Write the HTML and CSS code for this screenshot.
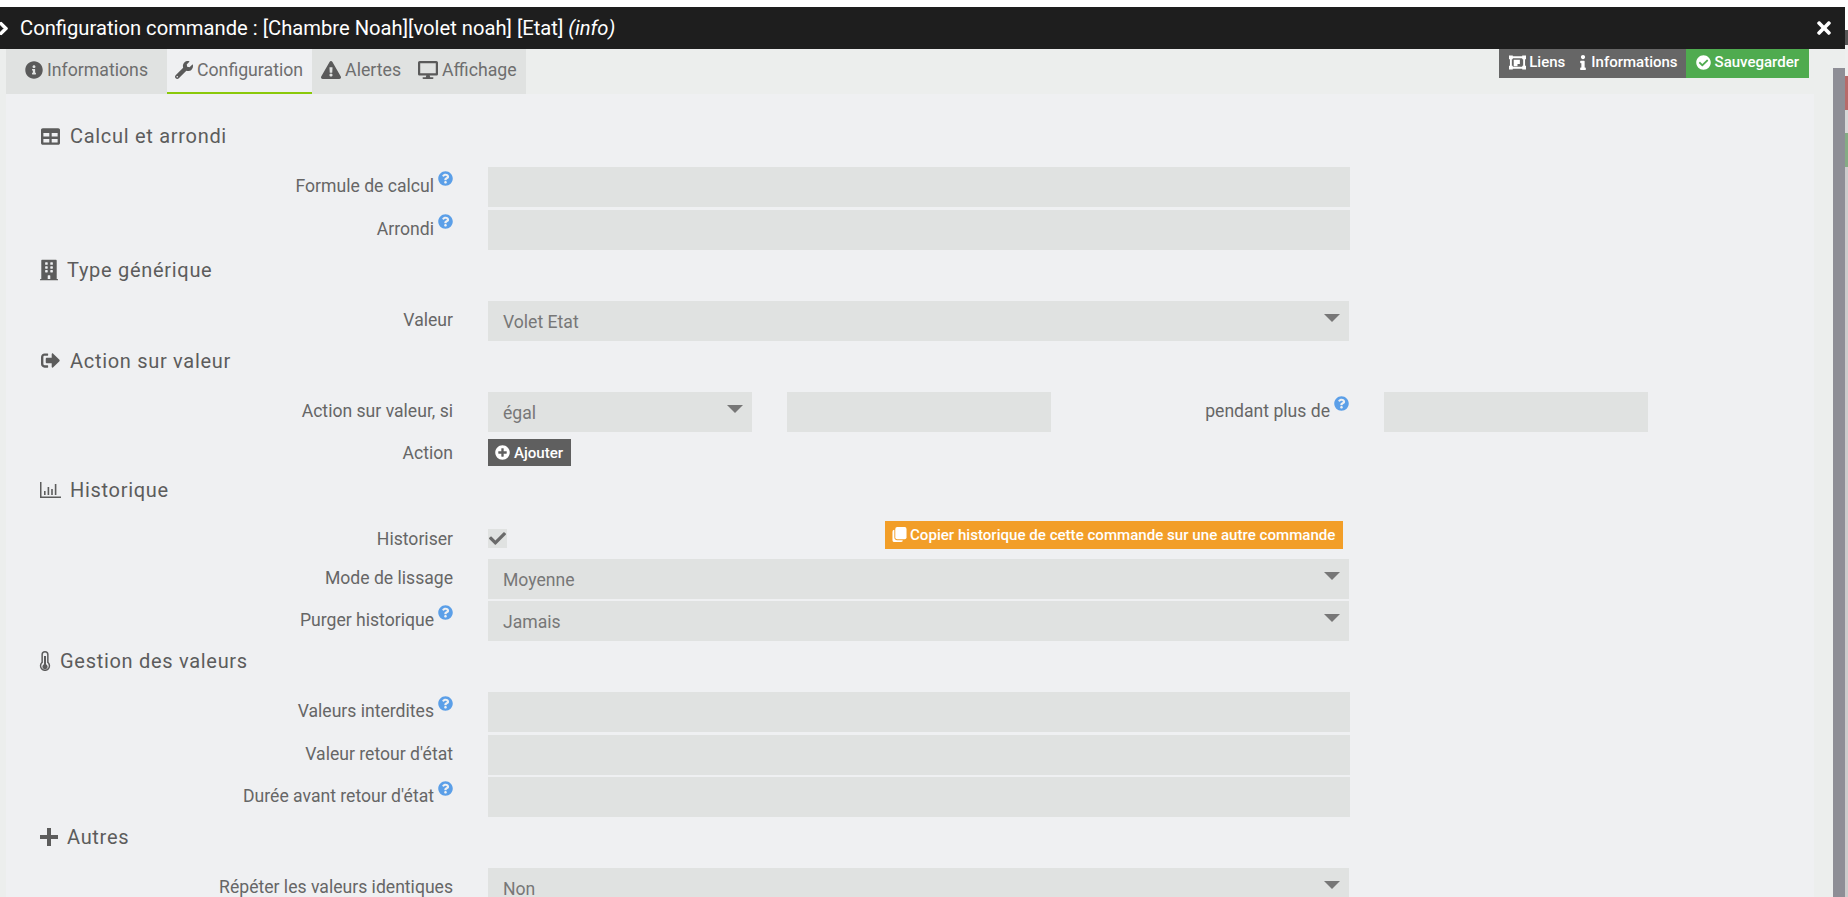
FILE: index.html
```html
<!DOCTYPE html>
<html lang="fr">
<head>
<meta charset="utf-8">
<title>Configuration commande</title>
<link rel="stylesheet" href="styles.css">
</head>
<body>
<svg class="defs" aria-hidden="true">
  <symbol id="i-info-circle" viewBox="0 0 512 512"><path d="M256 8C119 8 8 119.1 8 256c0 137 111 248 248 248s248-111 248-248C504 119.1 393 8 256 8zm0 110c23.2 0 42 18.8 42 42s-18.8 42-42 42-42-18.8-42-42 18.8-42 42-42zm56 254c0 6.6-5.4 12-12 12h-88c-6.6 0-12-5.4-12-12v-24c0-6.6 5.4-12 12-12h12v-64h-12c-6.6 0-12-5.4-12-12v-24c0-6.6 5.4-12 12-12h64c6.6 0 12 5.4 12 12v100h12c6.6 0 12 5.4 12 12v24z"/></symbol>
  <symbol id="i-wrench" viewBox="0 0 512 512"><path d="M507.73 109.1c-2.24-9.03-13.54-12.09-20.12-5.51l-74.36 74.36-67.88-11.31-11.31-67.88 74.36-74.36c6.62-6.62 3.43-17.9-5.66-20.16-47.38-11.74-99.55.91-136.58 37.93-39.64 39.64-50.55 97.1-34.05 147.2L18.74 402.76c-24.99 24.99-24.99 65.51 0 90.5 24.99 24.99 65.51 24.99 90.5 0l213.21-213.21c50.12 16.71 107.47 5.68 147.37-34.22 37.07-37.07 49.7-89.32 37.91-136.73zM64 472c-13.25 0-24-10.75-24-24 0-13.26 10.75-24 24-24s24 10.74 24 24c0 13.25-10.75 24-24 24z"/></symbol>
  <symbol id="i-warning" viewBox="0 0 576 512"><path d="M569.517 440.013C587.975 472.007 564.806 512 527.94 512H48.054c-36.937 0-59.999-40.055-41.577-71.987L246.423 23.985c18.467-32.009 64.72-31.951 83.154 0l239.94 416.028zM288 354c-25.405 0-46 20.595-46 46s20.595 46 46 46 46-20.595 46-46-20.595-46-46-46zm-43.673-165.346l7.418 136c.347 6.364 5.609 11.346 11.982 11.346h48.546c6.373 0 11.635-4.982 11.982-11.346l7.418-136c.375-6.874-5.098-12.654-11.982-12.654h-63.383c-6.884 0-12.356 5.78-11.981 12.654z"/></symbol>
  <symbol id="i-desktop" viewBox="0 0 576 512"><path d="M528 0H48C21.5 0 0 21.5 0 48v320c0 26.5 21.5 48 48 48h192l-16 48h-72c-13.3 0-24 10.7-24 24s10.7 24 24 24h272c13.3 0 24-10.7 24-24s-10.7-24-24-24h-72l-16-48h192c26.5 0 48-21.5 48-48V48c0-26.5-21.5-48-48-48zm-16 352H64V64h448v288z"/></symbol>
  <symbol id="i-table" viewBox="0 0 512 512"><path d="M464 32H48C21.49 32 0 53.49 0 80v352c0 26.51 21.49 48 48 48h416c26.51 0 48-21.49 48-48V80c0-26.51-21.49-48-48-48zM224 416H64v-96h160v96zm0-160H64v-96h160v96zm224 160H288v-96h160v96zm0-160H288v-96h160v96z"/></symbol>
  <symbol id="i-building" viewBox="0 0 448 512"><path d="M436 480h-20V24c0-13.255-10.745-24-24-24H56C42.745 0 32 10.745 32 24v456H12c-6.627 0-12 5.373-12 12v20h448v-20c0-6.627-5.373-12-12-12zM128 76c0-6.627 5.373-12 12-12h40c6.627 0 12 5.373 12 12v40c0 6.627-5.373 12-12 12h-40c-6.627 0-12-5.373-12-12V76zm0 96c0-6.627 5.373-12 12-12h40c6.627 0 12 5.373 12 12v40c0 6.627-5.373 12-12 12h-40c-6.627 0-12-5.373-12-12v-40zm52 148h-40c-6.627 0-12-5.373-12-12v-40c0-6.627 5.373-12 12-12h40c6.627 0 12 5.373 12 12v40c0 6.627-5.373 12-12 12zm76 160h-64v-84c0-6.627 5.373-12 12-12h40c6.627 0 12 5.373 12 12v84zm64-172c0 6.627-5.373 12-12 12h-40c-6.627 0-12-5.373-12-12v-40c0-6.627 5.373-12 12-12h40c6.627 0 12 5.373 12 12v40zm0-96c0 6.627-5.373 12-12 12h-40c-6.627 0-12-5.373-12-12v-40c0-6.627 5.373-12 12-12h40c6.627 0 12 5.373 12 12v40zm0-96c0 6.627-5.373 12-12 12h-40c-6.627 0-12-5.373-12-12V76c0-6.627 5.373-12 12-12h40c6.627 0 12 5.373 12 12v40z"/></symbol>
  <symbol id="i-signout" viewBox="0 0 512 512"><path d="M497 273L329 441c-15 15-41 4.5-41-17v-96H152c-13.3 0-24-10.7-24-24v-96c0-13.3 10.7-24 24-24h136V88c0-21.4 25.9-32 41-17l168 168c9.3 9.4 9.3 24.6 0 34zM192 436v-40c0-6.6-5.4-12-12-12H96c-17.7 0-32-14.3-32-32V160c0-17.7 14.3-32 32-32h84c6.6 0 12-5.4 12-12V76c0-6.6-5.4-12-12-12H96c-53 0-96 43-96 96v192c0 53 43 96 96 96h84c6.6 0 12-5.4 12-12z"/></symbol>
  <symbol id="i-chart" viewBox="0 0 21 16"><path d="M0 0h1.500v14.500H21V16H0zM4 9h1.600v4H4zM7.600 5h1.600v8H7.600zM11.200 7h1.600v6h-1.600zM14.800 2h1.600v11h-1.600z"/></symbol>
  <symbol id="i-thermo" viewBox="0 0 12 20"><path fill-rule="evenodd" d="M6 0a3.6 3.6 0 0 1 3.6 3.6v7.5a5.2 5.2 0 1 1-7.2 0V3.600A3.600 3.600 0 0 1 6 0zm0 1.500a2.100 2.100 0 0 0-2.100 2.100v8.200a3.700 3.700 0 1 0 4.200 0V3.600A2.100 2.100 0 0 0 6 1.500z"/><path d="M5 5h2v8.200a2.600 2.600 0 1 1-2 0z"/></symbol>
  <symbol id="i-plus" viewBox="0 0 18 18"><path d="M7 0h4v7h7v4h-7v7H7v-7H0V7h7z"/></symbol>
  <symbol id="i-question" viewBox="0 0 512 512"><path d="M504 256c0 136.997-111.043 248-248 248S8 392.997 8 256C8 119.083 119.043 8 256 8s248 111.083 248 248zM262.655 90c-54.497 0-89.255 22.957-116.549 63.758-3.536 5.286-2.353 12.415 2.715 16.258l34.699 26.31c5.205 3.947 12.621 3.008 16.665-2.122 17.864-22.658 30.113-35.797 57.303-35.797 20.429 0 45.698 13.148 45.698 32.958 0 14.976-12.363 22.667-32.534 33.976C247.128 238.528 216 254.941 216 296v4c0 6.627 5.373 12 12 12h56c6.627 0 12-5.373 12-12v-1.333c0-28.462 83.186-29.647 83.186-106.667 0-58.002-60.165-102-116.531-102zM256 338c-25.365 0-46 20.635-46 46 0 25.364 20.635 46 46 46s46-20.636 46-46c0-25.365-20.635-46-46-46z"/></symbol>
  <symbol id="i-check-circle" viewBox="0 0 512 512"><path d="M504 256c0 136.967-111.033 248-248 248S8 392.967 8 256 119.033 8 256 8s248 111.033 248 248zM227.314 387.314l184-184c6.248-6.248 6.248-16.379 0-22.627l-22.627-22.627c-6.248-6.249-16.379-6.249-22.628 0L216 308.118l-70.059-70.059c-6.248-6.248-16.379-6.248-22.628 0l-22.627 22.627c-6.248 6.248-6.248 16.379 0 22.627l104 104c6.249 6.249 16.379 6.249 22.628.001z"/></symbol>
  <symbol id="i-plus-circle" viewBox="0 0 512 512"><path d="M256 8C119 8 8 119 8 256s111 248 248 248 248-111 248-248S393 8 256 8zm144 276c0 6.600-5.400 12-12 12h-92v92c0 6.600-5.400 12-12 12h-56c-6.600 0-12-5.400-12-12v-92h-92c-6.600 0-12-5.400-12-12v-56c0-6.600 5.400-12 12-12h92v-92c0-6.600 5.400-12 12-12h56c6.600 0 12 5.400 12 12v92h92c6.600 0 12 5.400 12 12v56z"/></symbol>
  <symbol id="i-check" viewBox="0 0 512 512"><path d="M173.898 439.404l-166.4-166.4c-9.997-9.997-9.997-26.206 0-36.204l36.203-36.204c9.997-9.998 26.207-9.998 36.204 0L192 312.69 432.095 72.596c9.997-9.997 26.207-9.997 36.204 0l36.203 36.204c9.997 9.997 9.997 26.206 0 36.204l-294.4 294.401c-9.998 9.997-26.207 9.997-36.204-.001z"/></symbol>
  <symbol id="i-times" viewBox="0 0 352 512"><path d="M242.72 256l100.070-100.070c12.280-12.280 12.280-32.190 0-44.480l-22.240-22.240c-12.280-12.280-32.190-12.280-44.480 0L176 189.280 75.930 89.210c-12.280-12.280-32.190-12.280-44.480 0L9.210 111.450c-12.280 12.280-12.280 32.190 0 44.480L109.280 256 9.210 356.070c-12.280 12.280-12.280 32.190 0 44.480l22.240 22.240c12.280 12.280 32.200 12.280 44.480 0L176 322.720l100.070 100.070c12.280 12.280 32.200 12.280 44.480 0l22.240-22.240c12.280-12.280 12.280-32.190 0-44.480L242.720 256z"/></symbol>
  <symbol id="i-chevron" viewBox="0 0 320 512"><path d="M285.476 272.971L91.132 467.314c-9.373 9.373-24.569 9.373-33.941 0l-22.667-22.667c-9.357-9.357-9.375-24.522-.04-33.901L188.505 256 34.484 101.255c-9.335-9.379-9.317-24.544.04-33.901l22.667-22.667c9.373-9.373 24.569-9.373 33.941 0L285.475 239.030c9.373 9.372 9.373 24.568.001 33.941z"/></symbol>
  <symbol id="i-info" viewBox="0 0 192 512"><path d="M20 424.229h20V279.771H20c-11.046 0-20-8.954-20-20V212c0-11.046 8.954-20 20-20h112c11.046 0 20 8.954 20 20v212.229h20c11.046 0 20 8.954 20 20V492c0 11.046-8.954 20-20 20H20c-11.046 0-20-8.954-20-20v-47.771c0-11.046 8.954-20 20-20zM96 0C56.235 0 24 32.235 24 72s32.235 72 72 72 72-32.235 72-72S135.764 0 96 0z"/></symbol>
  <symbol id="i-ungroup" viewBox="0 0 18 15"><path fill-rule="evenodd" d="M0 0h4v1h10V0h4v4h-1v7h1v4h-4v-1H4v1H0v-4h1V4H0zm3 3v8h1v1h10v-1h1V4h-1V3H4v1H3z"/><path d="M5 4.500h6.500V9H9v2.500H5z"/></symbol>
  <symbol id="i-copy" viewBox="0 0 15 16"><path d="M5 0h8a2 2 0 0 1 2 2v9a2 2 0 0 1-2 2H5a2 2 0 0 1-2-2V2a2 2 0 0 1 2-2z"/><path d="M0 5a2 2 0 0 1 2-2v8a3 3 0 0 0 3 3h6a2 2 0 0 1-2 2H2a2 2 0 0 1-2-2z"/></symbol>
</svg>

<div class="window">
  <main class="modal">
    <header class="titlebar">
      <svg class="ic title-chevron" viewBox="0 0 320 512"><use href="#i-chevron"/></svg>
      <h1 class="title">Configuration commande : [Chambre Noah][volet noah] [Etat] <em>(info)</em></h1>
      <svg class="ic title-close"><use href="#i-times"/></svg>
    </header>
    <div class="modal-body">
      <div class="dialog">
        <div class="topbar">
          <nav class="tabs">
            <a class="tab tab-first"><svg class="ic ic-tab"><use href="#i-info-circle"/></svg>Informations</a>
            <a class="tab tab-active"><svg class="ic ic-tab"><use href="#i-wrench"/></svg>Configuration</a>
            <a class="tab"><svg class="ic ic-tab"><use href="#i-warning"/></svg>Alertes</a>
            <a class="tab tab-last"><svg class="ic ic-tab"><use href="#i-desktop"/></svg>Affichage</a>
          </nav>
          <div class="actions">
            <a class="act act-dark act-links"><svg class="ic ic-ungroup"><use href="#i-ungroup"/></svg>Liens</a>
            <a class="act act-dark act-info"><svg class="ic ic-i"><use href="#i-info"/></svg>Informations</a>
            <a class="act act-green"><svg class="ic ic-act"><use href="#i-check-circle"/></svg>Sauvegarder</a>
          </div>
        </div>
        <section class="panel">
          <h2 class="head"><svg class="ic ic-head"><use href="#i-table"/></svg>Calcul et arrondi</h2>
          <div class="row"><div class="label">Formule de calcul<svg class="ic help"><use href="#i-question"/></svg></div><div class="input wide"></div></div>
          <div class="row"><div class="label">Arrondi<svg class="ic help"><use href="#i-question"/></svg></div><div class="input wide"></div></div>

          <h2 class="head"><svg class="ic ic-head ic-building"><use href="#i-building"/></svg>Type générique</h2>
          <div class="row"><div class="label">Valeur</div><div class="input select wide">Volet Etat</div></div>

          <h2 class="head"><svg class="ic ic-head"><use href="#i-signout"/></svg>Action sur valeur</h2>
          <div class="row">
            <div class="label">Action sur valeur, si</div>
            <div class="input select third">égal</div>
            <div class="input third gap-left"></div>
            <div class="label label-mid">pendant plus de<svg class="ic help"><use href="#i-question"/></svg></div>
            <div class="input third"></div>
          </div>
          <div class="row row-button">
            <div class="label label-center">Action</div>
            <a class="btn btn-grey"><svg class="ic ic-btn"><use href="#i-plus-circle"/></svg>Ajouter</a>
          </div>

          <h2 class="head"><svg class="ic ic-head ic-chart"><use href="#i-chart"/></svg>Historique</h2>
          <div class="row row-check">
            <div class="label label-center">Historiser</div>
            <div class="checkbox"><svg class="ic ic-check"><use href="#i-check"/></svg></div>
            <a class="btn btn-orange"><svg class="ic ic-btn"><use href="#i-copy"/></svg>Copier historique de cette commande sur une autre commande</a>
          </div>
          <div class="row row-after-check"><div class="label">Mode de lissage</div><div class="input select wide">Moyenne</div></div>
          <div class="row"><div class="label">Purger historique<svg class="ic help"><use href="#i-question"/></svg></div><div class="input select wide">Jamais</div></div>

          <h2 class="head"><svg class="ic ic-head ic-thermo"><use href="#i-thermo"/></svg>Gestion des valeurs</h2>
          <div class="row"><div class="label">Valeurs interdites<svg class="ic help"><use href="#i-question"/></svg></div><div class="input wide"></div></div>
          <div class="row"><div class="label">Valeur retour d'état</div><div class="input wide"></div></div>
          <div class="row"><div class="label">Durée avant retour d'état<svg class="ic help"><use href="#i-question"/></svg></div><div class="input wide"></div></div>

          <h2 class="head"><svg class="ic ic-head ic-plus"><use href="#i-plus"/></svg>Autres</h2>
          <div class="row"><div class="label">Répéter les valeurs identiques</div><div class="input select wide">Non</div></div>
        </section>
      </div>
      <div class="scrollbar"></div>
    </div>
  </main>
  <aside class="behind">
    <div class="b b-dark"></div>
    <div class="b b-light"></div>
    <div class="b b-red"></div>
    <div class="b b-grey"></div>
    <div class="b b-green"></div>
    <div class="b b-rest"></div>
  </aside>
</div>
</body>
</html>
```
FILE: styles.css
```css
* { box-sizing: border-box; }
html, body { margin: 0; height: 897px; overflow: hidden; background: #fff; }
body { font-family: Roboto, "Liberation Sans", sans-serif; color: #666; }
.defs { width: 0; height: 0; position: absolute; }
.ic { display: block; flex: none; fill: currentColor; }

.window { display: flex; height: 897px; padding-top: 7px; }
.modal { width: 1845px; display: flex; flex-direction: column; overflow: hidden; }

.titlebar { height: 42px; flex: none; background: #1e1e1e; color: #fff; display: flex; align-items: center; }
.title-chevron { width: 9px; height: 15px; margin-left: -1px; margin-right: 12px; overflow: visible; stroke: currentColor; stroke-width: 40px; }
.title { margin: 0; flex: 1; font-size: 20.2px; font-weight: 400; line-height: 42px; white-space: nowrap; }
.title-close { width: 14px; height: 20px; margin-right: 14px; }

.modal-body { flex: 1; display: flex; background: #eceeed; min-height: 0; }
.dialog { flex: 1; min-width: 0; padding-left: 6px; padding-right: 19px; display: flex; flex-direction: column; }
.scrollbar { width: 12px; flex: none; margin-top: 19px; background: #8e8e96; }

.topbar { display: flex; justify-content: space-between; align-items: flex-start; height: 45px; flex: none; }
.tabs { display: flex; height: 45px; background: #e0e2e1; }
.tab { display: flex; align-items: center; gap: 4px; height: 45px; padding: 0 9px 3px; font-size: 17.7px; color: #6e6e6e; }
.tab-first { padding: 0 19px 3px 18px; gap: 3px; }
.tab-active { background: #eff0f2; border-bottom: 2px solid #8bc90a; padding: 0 9px 1px 7px; gap: 3px; }
.tab-last { padding-left: 8px; }
.ic-tab { width: 20px; height: 18px; color: #5a5a5a; }

.actions { display: flex; height: 29px; margin-right: 5px; color: #fff; font-size: 15px; font-weight: 500; }
.act { display: flex; align-items: center; gap: 3px; height: 29px; padding-bottom: 3px; }
.act-dark { background: #666; padding-left: 10px; padding-right: 8px; }
.act-links { padding-right: 5px; }
.act-green { background: #4fab4f; padding: 0 10px 3px; gap: 4px; }
.ic-ungroup { width: 17px; height: 15px; }
.ic-i { width: 6px; height: 15px; margin-right: 2px; }
.ic-act { width: 15px; height: 15px; }

.panel { flex: 1; background: #eff0f2; padding: 22px 0 0 0; min-height: 0; }
.head { margin: 0 0 11px; height: 40px; padding-left: 34px; display: flex; align-items: center; gap: 9px; font-size: 20px; font-weight: 400; color: #5c5c5c; letter-spacing: .7px; }
.ic-head { width: 21px; height: 19px; }
.ic-building { width: 18px; height: 22px; }
.ic-chart { height: 16px; }
.ic-thermo { width: 12px; height: 20px; margin-left: -1px; }
.ic-plus { width: 18px; height: 18px; }

.row { display: flex; height: 40px; }
.row + .row { margin-top: 2.5px; }
.label { width: 447px; flex: none; margin-right: 35px; display: flex; justify-content: flex-end; align-items: flex-start; padding-top: 9px; font-size: 17.6px; font-weight: 400; line-height: 20px; color: #666; white-space: nowrap; }
.label-center { padding-top: 0; align-items: center; }
.row-check .label-center { padding-top: 8px; }
.label-mid { width: 298px; margin-right: 35px; }
.help { width: 15px; height: 15px; margin: -5px 0 0 4px; color: #5b9fe8; }

.input { background: #e0e2e1; height: 40px; position: relative; font-size: 17.6px; color: #777; line-height: 42px; padding-left: 15px; }
.wide { width: 862px; }
.select.wide { width: 861px; }
.third { width: 264px; }
.gap-left { margin-left: 35px; }
.select::after { content: ""; position: absolute; right: 9px; top: 13px; border-style: solid; border-width: 8px 8px 0; border-color: #777 transparent transparent; }

.row-button { height: 27px; margin-bottom: 3.5px; }
.row + .row-button { margin-top: 7.5px; }
.btn { display: flex; align-items: center; color: #fff; font-size: 15.1px; font-weight: 500; }
.btn-grey { background: #5f5f5f; width: 83px; height: 27px; padding-left: 7px; gap: 4px; }
.ic-btn { width: 15px; height: 15px; }
.row-check { height: 28px; }
.checkbox { width: 19px; height: 19px; margin-top: 8px; background: #e0e2e1; display: flex; align-items: center; justify-content: center; color: #6a6a6a; }
.ic-check { width: 17px; height: 17px; }
.btn-orange { background: #f29e28; margin-left: 378px; width: 458px; height: 28px; padding-left: 7px; gap: 3px; }
.row + .row-after-check { margin-top: 10px; }

.behind { width: 3px; flex: none; display: flex; flex-direction: column; margin-top: -7px; height: 897px; }
.b-dark { height: 45px; background: linear-gradient(#fff 0, #fff 30px, #555 30px); }
.b-light { height: 31px; background: #efefef; }
.b-red { height: 34px; background: #b86a6a; }
.b-grey { height: 23px; background: #d8d8d8; }
.b-green { height: 34px; background: #85ab85; }
.b-rest { flex: 1; background: #ccc; }
```
